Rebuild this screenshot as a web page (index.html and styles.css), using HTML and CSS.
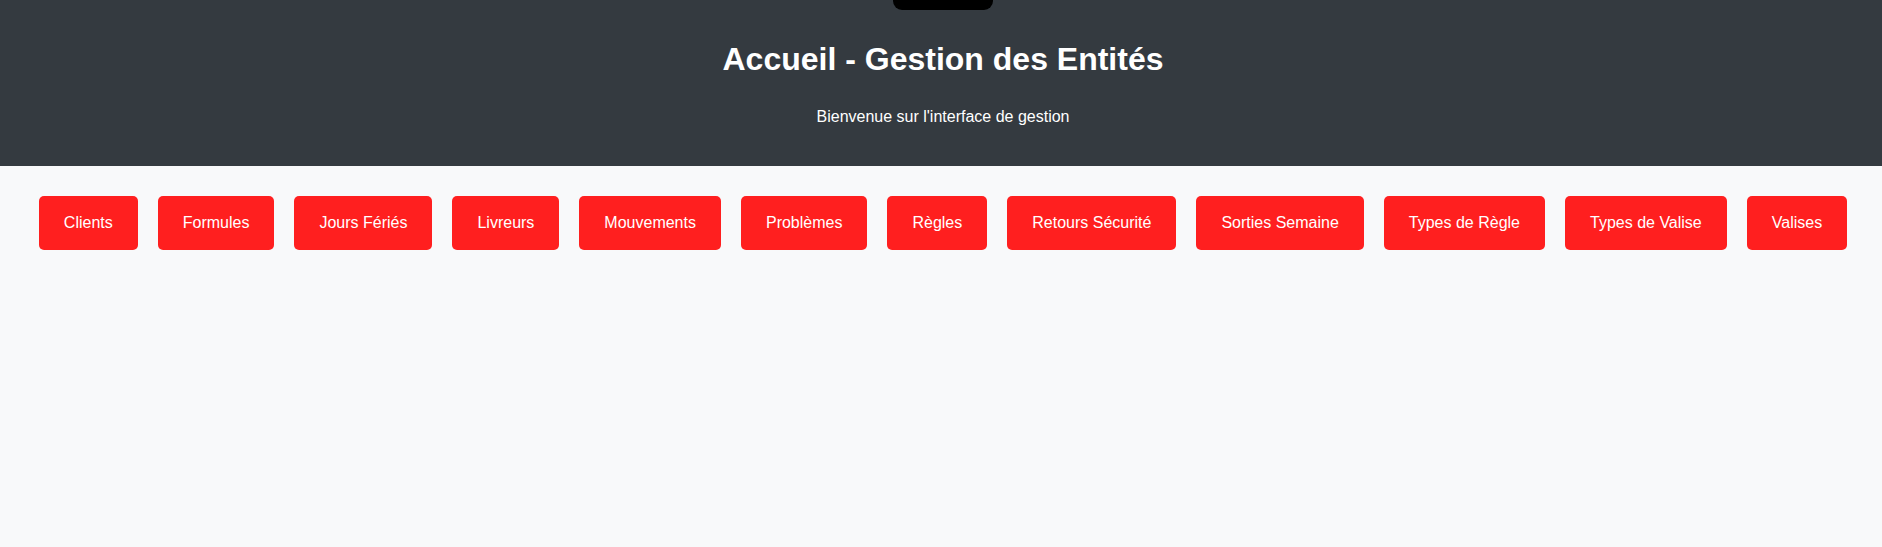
FILE: index.html
```html
<!DOCTYPE html>
<html lang="fr">
<head>
<meta charset="utf-8">
<title>Accueil - Gestion des Entités</title>
<link rel="stylesheet" href="styles.css">
</head>
<body>
<div class="notch"></div>
<header class="hero">
  <h1 class="hero-title">Accueil - Gestion des Entités</h1>
  <p class="hero-sub">Bienvenue sur l'interface de gestion</p>
</header>
<nav class="entity-nav">
  <a class="entity-btn" href="#">Clients</a>
  <a class="entity-btn" href="#">Formules</a>
  <a class="entity-btn" href="#">Jours Fériés</a>
  <a class="entity-btn" href="#">Livreurs</a>
  <a class="entity-btn" href="#">Mouvements</a>
  <a class="entity-btn" href="#">Problèmes</a>
  <a class="entity-btn" href="#">Règles</a>
  <a class="entity-btn" href="#">Retours Sécurité</a>
  <a class="entity-btn" href="#">Sorties Semaine</a>
  <a class="entity-btn" href="#">Types de Règle</a>
  <a class="entity-btn" href="#">Types de Valise</a>
  <a class="entity-btn" href="#">Valises</a>
</nav>
</body>
</html>
```
FILE: styles.css
```css
html, body {
  margin: 0;
  padding: 0;
}
body {
  background: #f8f9fa;
  font-family: "Liberation Sans", Arial, sans-serif;
  min-height: 547px;
}
.notch {
  position: absolute;
  top: 0;
  left: 893px;
  width: 100px;
  height: 10px;
  background: #000;
  border-radius: 0 0 9px 9px;
}
.hero {
  background: #343a40;
  color: #fff;
  text-align: center;
  padding: 41px 0 40px 4px;
  height: 166px;
  box-sizing: border-box;
}
.hero-title {
  margin: 0;
  font-size: 32px;
  line-height: 36px;
  font-weight: bold;
}
.hero-sub {
  margin: 31px 0 0;
  font-size: 16px;
  line-height: 18px;
}
.entity-nav {
  display: flex;
  justify-content: center;
  gap: 20px;
  padding: 30px 0 0 4px;
}
.entity-btn {
  display: block;
  background: #ff1f1f;
  color: #fff;
  text-decoration: none;
  font-size: 16px;
  line-height: 18px;
  padding: 18px 25px;
  border-radius: 5px;
}
```
